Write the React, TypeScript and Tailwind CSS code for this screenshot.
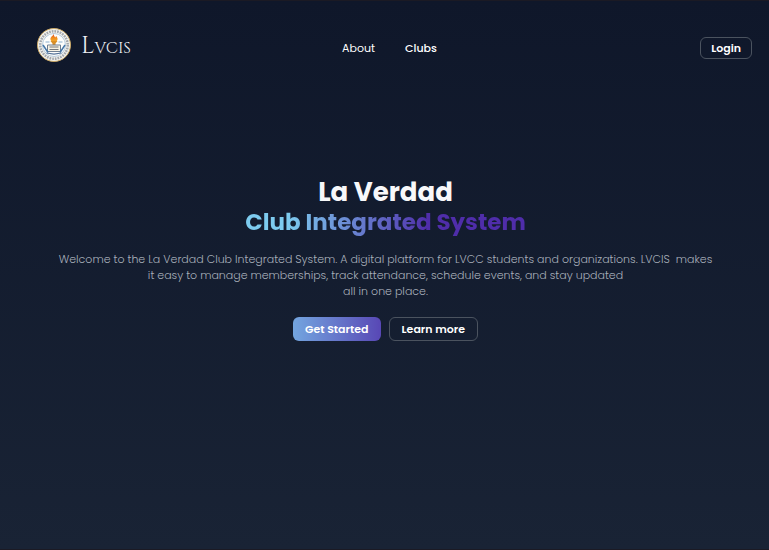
const outline =
  "rounded-md border border-[#4b535f] text-[11px] leading-4 font-semibold text-white";

function Seal() {
  return (
    <svg viewBox="0 0 68 68" className="size-[34px] shrink-0" aria-hidden="true">
      <defs>
        <linearGradient id="flame" x1="0" y1="0" x2="0" y2="1">
          <stop offset="0" stopColor="#d9472b" />
          <stop offset="0.5" stopColor="#f08a1c" />
          <stop offset="1" stopColor="#f3b02f" />
        </linearGradient>
      </defs>
      <circle cx="34" cy="34" r="33" fill="#f4f3ee" stroke="#c9a765" strokeWidth="2" />
      <circle cx="34" cy="34" r="27.5" fill="none" stroke="#a3a8ae" strokeWidth="5" strokeDasharray="3.4 2" />
      <circle cx="34" cy="34" r="23" fill="#fdfdfb" stroke="#9db9d3" strokeWidth="1.5" />
      <path d="M34 11c-1 5-8 6-7 12 0 3 4 5 7 5s8-2 7-7c-1-3-2-3-2-5-2 1-2 2-2 3-2-2-4-4-3-8z" fill="url(#flame)" />
      <path d="M27 26h14l-4 5v4h-6v-4z" fill="#d98f27" />
      <path d="M17 28h8M43 28h8" stroke="#8cb0cf" strokeWidth="2" />
      <path d="M21 34h26v13H21z" fill="#f6f2e4" stroke="#6f7f92" strokeWidth="2" />
      <path d="M25 38h18M25 43h18" stroke="#77797c" strokeWidth="2" />
      <path d="M12 34l10 15M56 34L46 49" stroke="#4577a8" strokeWidth="3" />
      <path d="M19 50l15 2 15-2" fill="none" stroke="#55749a" strokeWidth="2.5" />
    </svg>
  );
}

export default function App() {
  return (
    <div className="flex min-h-screen flex-col border-y border-[#1b1a24] bg-linear-to-b from-[#0f172a] to-[#192335] font-[Poppins,Inter,sans-serif] text-white">
      <header className="grid grid-cols-[1fr_auto_1fr] items-center px-[17px] pt-[27px]">
        <a href="#home" className="mb-1.5 flex items-center gap-2.5 pl-5" aria-label="LVCIS home">
          <Seal />
          <span className="pt-0.5 font-[Cinzel,'Liberation_Serif',serif] text-2xl leading-8 text-[#eceef2]">
            L<span className="text-base">VCIS</span>
          </span>
        </a>
        <nav className="flex gap-[30px] pl-2.5 text-[11px] leading-4">
          <a href="#about">About</a>
          <a href="#clubs" className="font-medium">Clubs</a>
        </nav>
        <button type="button" className={`${outline} justify-self-end px-2.5 py-0.5`}>
          Login
        </button>
      </header>

      <main className="flex flex-col items-center pt-[108px] pr-4 pl-[18px] text-center">
        <h1 className="font-bold">
          <span className="block text-[26px] leading-8 text-[#f8f8fa]">La Verdad</span>
          <span className="block bg-linear-to-r from-[#7dcbef] from-15% via-[#6370c8] via-45% to-[#4f2daa] to-65% bg-clip-text text-[23px] leading-7 text-transparent">
            Club Integrated System
          </span>
        </h1>
        <p className="mt-[15px] text-[11px] leading-4 font-light whitespace-pre-wrap text-[#a8afba]">
          {"Welcome to the La Verdad Club Integrated System. A digital platform for LVCC students and organizations. LVCIS  makes"}
          <br />
          it easy to manage memberships, track attendance, schedule events, and stay updated
          <br />
          all in one place.
        </p>
        <div className="mt-[18px] flex gap-2">
          <button
            type="button"
            className="rounded-md bg-linear-to-r from-[#73a5df] to-[#5847b5] px-3 py-1 text-[11px] leading-4 font-semibold"
          >
            Get Started
          </button>
          <button type="button" className={`${outline} px-3 py-[3px]`}>
            Learn more
          </button>
        </div>
      </main>
    </div>
  );
}
